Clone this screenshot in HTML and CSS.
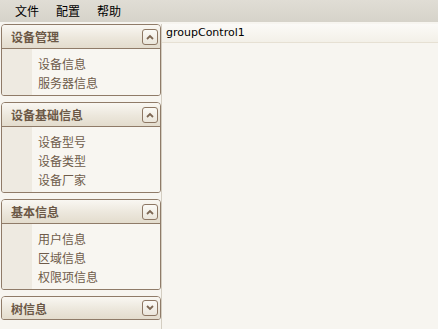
FILE: index.html
```html
<!DOCTYPE html>
<html lang="zh-CN">
<head>
    <meta charset="UTF-8">
    <title>设备管理</title>
    <link rel="stylesheet" href="styles.css">
</head>
<body>
    <!-- top menu -->
    <div class="menubar">
        <span class="menu-item">文件</span>
        <span class="menu-item">配置</span>
        <span class="menu-item">帮助</span>
    </div>

    <div class="layout">
        <!-- left navigation groups -->
        <div class="nav">
            <div class="nav-group">
                <div class="nav-header">
                    <span>设备管理</span>
                    <span class="toggle">
                        <svg width="8" height="6" viewBox="0 0 8 6"><path d="M1 5 L4 2 L7 5" fill="none" stroke="#7d6753" stroke-width="1.8"/></svg>
                    </span>
                </div>
                <div class="nav-items">
                    <div class="nav-item">设备信息</div>
                    <div class="nav-item">服务器信息</div>
                </div>
            </div>

            <div class="nav-group">
                <div class="nav-header">
                    <span>设备基础信息</span>
                    <span class="toggle">
                        <svg width="8" height="6" viewBox="0 0 8 6"><path d="M1 5 L4 2 L7 5" fill="none" stroke="#7d6753" stroke-width="1.8"/></svg>
                    </span>
                </div>
                <div class="nav-items">
                    <div class="nav-item">设备型号</div>
                    <div class="nav-item">设备类型</div>
                    <div class="nav-item">设备厂家</div>
                </div>
            </div>

            <div class="nav-group">
                <div class="nav-header">
                    <span>基本信息</span>
                    <span class="toggle">
                        <svg width="8" height="6" viewBox="0 0 8 6"><path d="M1 5 L4 2 L7 5" fill="none" stroke="#7d6753" stroke-width="1.8"/></svg>
                    </span>
                </div>
                <div class="nav-items">
                    <div class="nav-item">用户信息</div>
                    <div class="nav-item">区域信息</div>
                    <div class="nav-item">权限项信息</div>
                </div>
            </div>

            <div class="nav-group collapsed">
                <div class="nav-header">
                    <span>树信息</span>
                    <span class="toggle">
                        <svg width="8" height="6" viewBox="0 0 8 6"><path d="M1 1 L4 4 L7 1" fill="none" stroke="#7d6753" stroke-width="1.8"/></svg>
                    </span>
                </div>
            </div>
        </div>

        <!-- main group control -->
        <div class="main">
            <div class="main-header">groupControl1</div>
        </div>
    </div>
</body>
</html>
```

FILE: styles.css
```css
body {
    margin: 0;
    background: #f7f5f0;
    font-family: "Noto Sans CJK SC", "DejaVu Sans", sans-serif;
    font-size: 12px;
    color: #6e5b4a;
    height: 329px;
    overflow: hidden;
}

.menubar {
    height: 22px;
    display: flex;
    align-items: center;
    padding-left: 7px;
    background: linear-gradient(#e0ddd5, #d6d3ca);
    color: #000;
}

.menu-item {
    padding: 0 8px;
    line-height: 22px;
    margin-right: 1px;
}

.layout {
    display: flex;
    height: 307px;
}

.nav {
    width: 160px;
    padding: 2px 0 0 1px;
    flex-shrink: 0;
}

.nav-group {
    border: 1px solid #8f7b68;
    border-radius: 4px 4px 3px 3px;
    margin-bottom: 6px;
    background: #f8f6f1;
    overflow: hidden;
}

.nav-header {
    height: 23px;
    display: flex;
    align-items: center;
    justify-content: space-between;
    padding: 0 2px 0 9px;
    background: linear-gradient(#f9f7f2, #ece7dc 55%, #e3dccd);
    border-bottom: 1px solid #8f7b68;
    font-weight: bold;
    color: #6b5846;
}

.collapsed .nav-header {
    border-bottom: none;
    height: 22px;
}

.toggle {
    width: 14px;
    height: 14px;
    border: 1px solid #8d7763;
    border-radius: 3px;
    background: linear-gradient(#fbfaf6, #ebe6db);
    display: flex;
    align-items: center;
    justify-content: center;
}

.nav-items {
    padding: 5px 0 3px 0;
    background: linear-gradient(to right, #eeeae1 30px, #f8f6f1 30px);
}

.nav-item {
    line-height: 19px;
    padding-left: 36px;
    color: #6e5b4a;
}

.main {
    flex: 1;
    margin-top: 2px;
    border-left: 1px solid #d4cec2;
}

.main-header {
    height: 18px;
    line-height: 18px;
    padding-left: 4px;
    font-family: "DejaVu Sans", sans-serif;
    font-size: 11px;
    color: #000;
    background: linear-gradient(#fbfaf7, #f3f0e8);
    border-bottom: 1px solid #e6e0d3;
}
```
